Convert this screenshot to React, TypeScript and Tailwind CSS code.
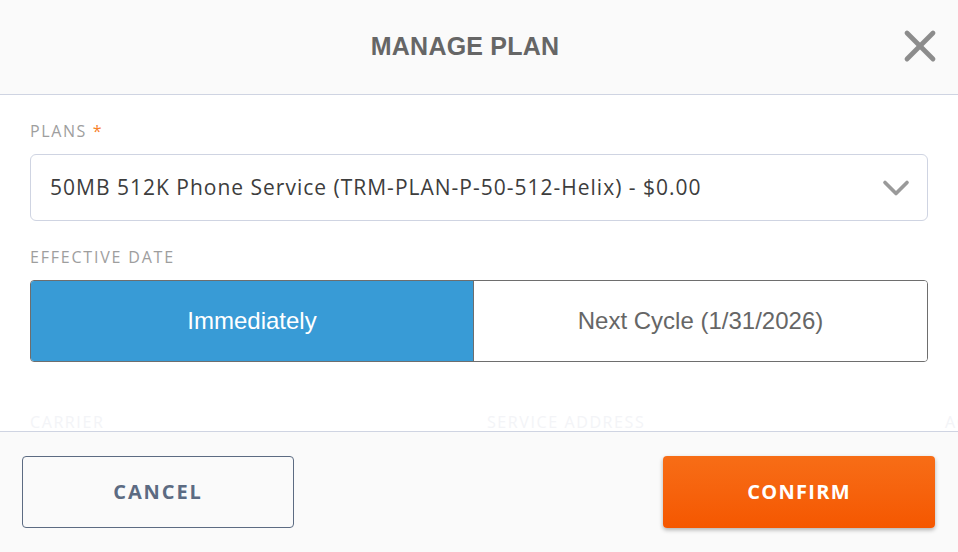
import { X, ChevronDown } from "lucide-react"

const sans = "font-['Open_Sans','Lato',sans-serif]"
const arial = "font-['Liberation_Sans',Arial,sans-serif]"

export default function App() {
  return (
    <div className="w-[958px] h-[552px] flex flex-col bg-white overflow-hidden">
      <header className="h-[95px] shrink-0 bg-[#fafafa] border-b border-[#cfd4e2] relative flex items-center justify-center pr-[28px]">
        <h1 className={`${arial} text-[25px] font-bold text-[#666666] tracking-[0.2px]`}>MANAGE PLAN</h1>
        <button className="absolute right-[12px] top-[20px] text-[#8c8c8c]">
          <X size={52} strokeWidth={2.2} />
        </button>
      </header>

      <main className={`${sans} flex-1 overflow-hidden px-[30px] flex flex-col`}>
        <div className="pt-[26px] text-[16px] tracking-[1.6px] text-[#9e9e9e] leading-5">
          PLANS <span className="text-[#f7812b]">*</span>
        </div>
        <div className="mt-[13px] h-[67px] shrink-0 border border-[#cfd4e2] rounded-[6px] flex items-center justify-between pl-[19px] pr-[9px]">
          <span className="text-[21px] tracking-[1px] text-[#3d3d3d]">50MB 512K Phone Service (TRM-PLAN-P-50-512-Helix) - $0.00</span>
          <ChevronDown size={44} strokeWidth={2} className="text-[#9a9a9a]" />
        </div>

        <div className="mt-[26px] text-[16px] tracking-[1.8px] text-[#9e9e9e] leading-5">EFFECTIVE DATE</div>
        <div className={`${arial} mt-[13px] h-[82px] shrink-0 grid grid-cols-[443px_1fr] border border-[#6e6e6e] rounded-[4px] overflow-hidden text-[24px]`}>
          <div className="bg-[#389bd6] text-white flex items-center justify-center border-r border-[#6e6e6e]">Immediately</div>
          <div className="bg-white text-[#666666] flex items-center justify-center">Next Cycle (1/31/2026)</div>
        </div>

        <div className="mt-[50px] grid grid-cols-[457px_458px_1fr] text-[16px] tracking-[1.6px] text-[#f3f4f7] leading-5 whitespace-nowrap">
          <span>CARRIER</span>
          <span>SERVICE ADDRESS</span>
          <span>ACCOUNT</span>
        </div>
      </main>

      <footer className={`${sans} h-[121px] shrink-0 bg-[#fafafa] border-t border-[#cfd4e2] flex justify-between pl-[22px] pr-[23px] pt-[24px]`}>
        <button className="w-[272px] h-[72px] border border-[#5c6b82] rounded-[4px] text-[#5c6b82] text-[20px] font-bold tracking-[1.9px]">
          CANCEL
        </button>
        <button className="w-[272px] h-[72px] rounded-[4px] bg-gradient-to-b from-[#f76d16] to-[#f55700] shadow-[0_2px_4px_rgba(0,0,0,0.3)] text-white text-[20px] font-bold tracking-[1.3px]">
          CONFIRM
        </button>
      </footer>
    </div>
  )
}
